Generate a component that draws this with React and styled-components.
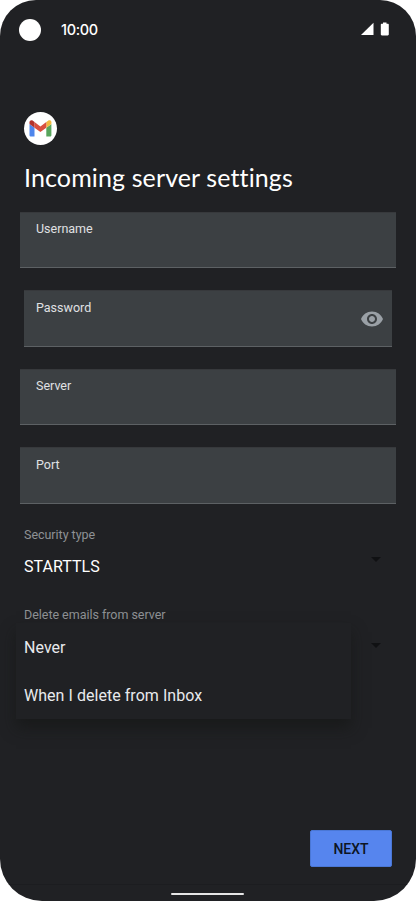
import React from 'react';
import styled, { createGlobalStyle, css } from 'styled-components';

const GlobalStyle = createGlobalStyle`
  * {
    box-sizing: border-box;
  }
  body {
    margin: 0;
    background: #ffffff;
  }
  p, h1, ul {
    margin: 0;
    padding: 0;
    font-weight: 400;
  }
`;

const Screen = styled.div`
  display: flex;
  flex-direction: column;
  width: 416px;
  height: 901px;
  overflow: hidden;
  border-radius: 36px 36px 42px 42px;
  background: #202124;
  color: #ffffff;
  font-family: Roboto, sans-serif;
`;

const StatusBar = styled.header`
  display: flex;
  align-items: center;
  height: 59px;
  padding: 0 27px 0 19px;
`;

const Camera = styled.span`
  width: 22px;
  height: 22px;
  border-radius: 50%;
  background: #ffffff;
`;

const Clock = styled.time`
  flex: 1;
  margin-left: 20px;
  font: 500 14.5px/20px Inter, sans-serif;
  letter-spacing: -0.35px;
`;

const StatusIcons = styled.svg`
  display: block;
  width: 28px;
  height: 14px;
  margin-top: -1px;
`;

const Main = styled.main`
  flex: 1;
  display: flex;
  flex-direction: column;
  padding: 53px 20px 0;
`;

const Logo = styled.div`
  display: flex;
  align-items: center;
  justify-content: center;
  width: 33px;
  height: 33px;
  margin-left: 4px;
  border-radius: 50%;
  background: #ffffff;
`;

const Title = styled.h1`
  margin: 16px 0 18.5px 4px;
  font: 400 25px/32px Lato, sans-serif;
  letter-spacing: 0.12px;
  white-space: nowrap;
`;

const Fields = styled.div`
  display: flex;
  flex-direction: column;
  gap: 22px;
`;

const Field = styled.label`
  display: flex;
  justify-content: space-between;
  height: 56.5px;
  padding: 8.5px 8px 0 16px;
  border-top: 1px solid #37393c;
  border-bottom: 1px solid #5d6164;
  background: #3c4043;
  color: #e0e1e3;
  font-size: 12.5px;
  line-height: 15px;
  ${({ $inset }) =>
    $inset &&
    css`
      margin: 0 4px;
      padding-left: 12px;
    `}
`;

const Eye = styled.svg`
  width: 24px;
  height: 24px;
  margin-top: 7px;
  fill: #9aa0a6;
`;

const Caption = styled.p`
  margin: ${({ $top }) => $top}px 0 0 4px;
  color: #8e9194;
  font-size: 12.5px;
  line-height: 16px;
  letter-spacing: -0.03px;
`;

const Select = styled.div`
  position: relative;
  display: flex;
  justify-content: space-between;
  height: ${({ $height }) => $height}px;
  padding: ${({ $top }) => $top}px 15px 0 4px;
  font-size: 16px;
  line-height: 20px;
  letter-spacing: 0.04px;
`;

const Arrow = styled.svg`
  width: 10px;
  height: 5px;
  margin-left: auto;
  fill: #101113;
`;

const Menu = styled.ul`
  position: absolute;
  top: 0;
  left: -4px;
  width: 335px;
  height: 96px;
  list-style: none;
  background: #202124;
  box-shadow: 0 9px 14px rgba(20, 21, 20, 0.6);
`;

const Option = styled.li`
  padding: 15px 8px 13px;
  color: #e8eaed;
  font-size: 16px;
  line-height: 20px;
`;

const Footer = styled.footer`
  display: flex;
  justify-content: flex-end;
  padding: 0 24px 17px;
`;

const Button = styled.button`
  width: 82px;
  height: 37px;
  padding: 0;
  border: 1px solid #4a77d5;
  border-radius: 2px;
  background: #5685ee;
  color: #0d1524;
  font: 500 14px/20px Roboto, sans-serif;
`;

const NavBar = styled.div`
  display: flex;
  justify-content: center;
  height: 17px;
  padding: 7.5px 1px 0 0;
  border-top: 1px solid #1c1d20;
`;

const Handle = styled.span`
  width: 73px;
  height: 2px;
  border-radius: 1px;
  background: #e6e6e6;
`;

const GmailMark = () => (
  <svg width="23" height="17" viewBox="0 0 23 17">
    <path fill="#4f86ec" d="M.5 4v11.2c0 .8.7 1.3 1.4 1.3h3.6V7.7z" />
    <path fill="#58a55c" d="M17.3 7.7v8.8H21c.8 0 1.4-.5 1.4-1.3V4z" />
    <path fill="#f1b93e" d="M17.3 2v5.7l5.1-3.7V2.2c0-1.8-2-2.4-3.3-1.5z" />
    <path fill="#d95040" d="M5.5 7.7V2l5.9 4.4L17.3 2v5.7l-5.9 4.4z" />
    <path fill="#b3322c" d="M.5 2.2V4l5 3.7V2L3.9.8C2.5-.2.5.5.5 2.2z" />
  </svg>
);

const DownArrow = () => (
  <Arrow viewBox="0 0 10 5">
    <path d="M0 0h10L5 5z" />
  </Arrow>
);

const fields = ['Username', 'Password', 'Server', 'Port'];
const options = ['Never', 'When I delete from Inbox'];

const App = () => (
  <>
    <GlobalStyle />
    <Screen>
      <StatusBar>
        <Camera />
        <Clock>10:00</Clock>
        <StatusIcons viewBox="0 0 28 14" fill="#ffffff">
          <path d="M0 13 12.5.8V13z" />
          <path d="M22 .5h3.5v1.2h1.2c.7 0 1.1.4 1.1 1v9.6c0 .7-.4 1.2-1.1 1.2h-5.8c-.7 0-1.1-.5-1.1-1.2V2.7c0-.6.4-1 1.1-1H22z" />
        </StatusIcons>
      </StatusBar>
      <Main>
        <Logo>
          <GmailMark />
        </Logo>
        <Title>Incoming server settings</Title>
        <Fields>
          {fields.map(name => (
            <Field key={name} $inset={name === 'Password'}>
              {name}
              {name === 'Password' && (
                <Eye viewBox="0 0 24 24">
                  <path d="M12 4.5C7 4.5 2.73 7.61 1 12c1.73 4.39 6 7.5 11 7.5s9.27-3.11 11-7.5c-1.73-4.39-6-7.5-11-7.5zM12 17c-2.76 0-5-2.24-5-5s2.24-5 5-5 5 2.24 5 5-2.24 5-5 5zm0-8c-1.66 0-3 1.34-3 3s1.34 3 3 3 3-1.34 3-3-1.34-3-3-3z" />
                </Eye>
              )}
            </Field>
          ))}
        </Fields>
        <Caption $top={23}>Security type</Caption>
        <Select $height={64} $top={14}>
          <span>STARTTLS</span>
          <DownArrow />
        </Select>
        <Caption $top={0}>Delete emails from server</Caption>
        <Select $height={98} $top={20}>
          <DownArrow />
          <Menu>
            {options.map(option => (
              <Option key={option}>{option}</Option>
            ))}
          </Menu>
        </Select>
      </Main>
      <Footer>
        <Button>NEXT</Button>
      </Footer>
      <NavBar>
        <Handle />
      </NavBar>
    </Screen>
  </>
);

export default App;
